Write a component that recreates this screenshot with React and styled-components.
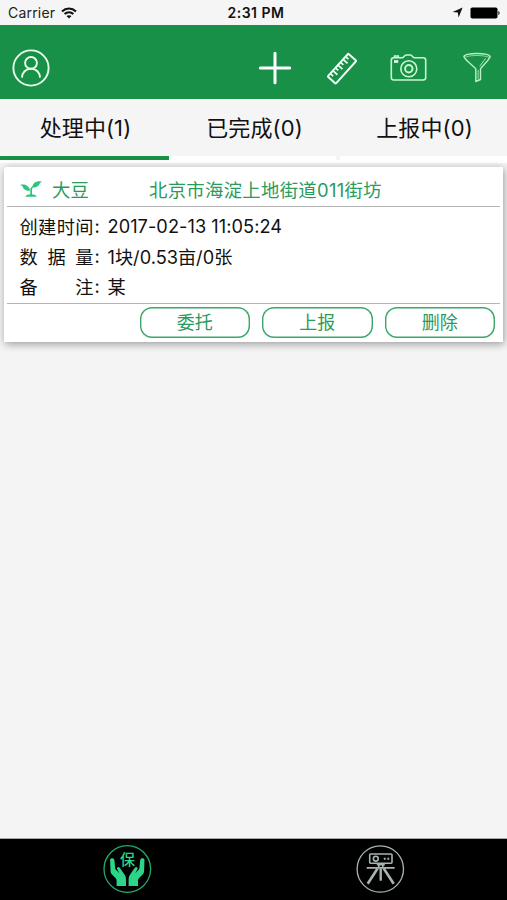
import React from "react";
import styled, { createGlobalStyle } from "styled-components";

const tabs = ["处理中(1)", "已完成(0)", "上报中(0)"];
const actions = ["委托", "上报", "删除"];

const rows = [
  { label: ["创", "建", "时", "间"], value: "2017-02-13 11:05:24", spacing: "0.05px" },
  { label: ["数", "据", "量"], value: "1块/0.53亩/0张", spacing: "0" },
  { label: ["备", "注"], value: "某" },
];

export default function App() {
  return (
    <Screen>
      <GlobalStyle />
      <StatusBar>
        <Carrier>
          Carrier <WifiIcon />
        </Carrier>
        <Clock>2:31 PM</Clock>
        <StatusRight>
          <LocationIcon />
          <BatteryIcon />
        </StatusRight>
      </StatusBar>
      <Header>
        <UserIcon />
        <Tools>
          <PlusIcon />
          <RulerIcon />
          <CameraIcon />
          <FunnelIcon />
        </Tools>
      </Header>
      <Tabs>
        {tabs.map((tab, i) => (
          <Tab key={tab} $active={i === 0}>
            {tab}
          </Tab>
        ))}
      </Tabs>
      <Content>
        <Card>
          <CardHead>
            <SproutIcon />
            <Crop>大豆</Crop>
            <Place>北京市海淀上地街道011街坊</Place>
          </CardHead>
          <CardBody>
            {rows.map((row) => (
              <Row key={row.value}>
                <Label>
                  {row.label.map((c) => (
                    <span key={c}>{c}</span>
                  ))}
                </Label>
                <Colon>:</Colon>
                <Value $spacing={row.spacing}>{row.value}</Value>
              </Row>
            ))}
          </CardBody>
          <CardFoot>
            {actions.map((a) => (
              <Action key={a}>{a}</Action>
            ))}
          </CardFoot>
        </Card>
      </Content>
      <BottomBar>
        <BottomItem>
          <InsuranceIcon />
        </BottomItem>
        <BottomItem>
          <SurveyIcon />
        </BottomItem>
      </BottomBar>
    </Screen>
  );
}

function WifiIcon() {
  return (
    <svg width="16" height="12" viewBox="0 0 16 12" fill="none" stroke="#111" strokeWidth="2.1">
      <path d="M1 4.4C5 .6 11 .6 15 4.4" />
      <path d="M3.6 7.1c2.5-2.3 6.3-2.3 8.8 0" />
      <path d="M8 11.6L5.5 9.1c1.4-1.3 3.6-1.3 5 0z" fill="#111" stroke="none" />
    </svg>
  );
}

function LocationIcon() {
  return (
    <svg width="11" height="11" viewBox="0 0 11 11" fill="#111">
      <path d="M10.6.4L6.6 10.4 5.8 5.4.6 4.9z" />
    </svg>
  );
}

function BatteryIcon() {
  return (
    <svg width="31" height="12" viewBox="0 0 31 12" fill="#000">
      <rect x="0.5" y="0.4" width="27" height="11.2" rx="1.8" />
      <path d="M28.4 4c1.5.3 1.5 3.7 0 4z" />
    </svg>
  );
}

function UserIcon() {
  return (
    <svg width="38" height="38" viewBox="0 0 38 38" fill="none" stroke="#e6ffe9" strokeWidth="1.9">
      <circle cx="19" cy="19" r="17.6" />
      <circle cx="19" cy="13.9" r="5.9" />
      <path d="M10 28.6c.2-5 3.6-8.9 9-8.9s8.8 3.9 9 8.9" />
    </svg>
  );
}

function PlusIcon() {
  return (
    <svg width="34" height="34" viewBox="0 0 34 34" stroke="#fff" strokeWidth="3" strokeLinecap="round">
      <path d="M17 2.3v29.4M2.3 17h29.4" />
    </svg>
  );
}

function RulerIcon() {
  return (
    <svg width="32" height="34" viewBox="0 0 32 34" fill="none" stroke="#f0fff2" strokeWidth="2" strokeLinejoin="round">
      <g transform="translate(16 17.7) rotate(-48)">
        <rect x="-15.4" y="-5.4" width="30.8" height="10.8" rx="0.8" />
        <path
          d="M-11.4-5.4v3.8M-7.600-5.400v6M-3.800-5.400v3.800M0-5.400v6M3.800-5.400v3.800M7.600-5.400v6M11.400-5.400v3.800"
          strokeWidth="1.7"
        />
      </g>
    </svg>
  );
}

function CameraIcon() {
  return (
    <svg width="38" height="30" viewBox="0 0 38 30" fill="none" stroke="#c9f7d2" strokeWidth="1.6">
      <path d="M3.8 4.8h8.400c1.5 0 2.2-2.8 4-2.8h4.3c1.800 0 2.300 2.800 4 2.800h8.700c1.600 0 2.500 1 2.500 2.500v17.200c0 1.500-.9 2.500-2.500 2.500H3.800c-1.600 0-2.500-1-2.500-2.500V7.300c0-1.500.9-2.500 2.500-2.500z" />
      <circle cx="18.8" cy="15.8" r="8" />
      <circle cx="18.8" cy="15.8" r="3.7" strokeWidth="2" />
      <path d="M4.500 4.500V3h3.800v1.500" />
      <rect x="4" y="7.2" width="4.2" height="2.6" fill="#e6ffe9" stroke="none" />
    </svg>
  );
}

function FunnelIcon() {
  return (
    <svg width="28" height="31" viewBox="0 0 28 31" fill="none" stroke="#b9efc5" strokeWidth="1.4" strokeLinejoin="round">
      <path d="M.9 4.7C.9 2.7 6.5 1.5 14 1.5s13.100 1.200 13.100 3.200c-1.200 3.300-6.700 8.500-9.600 12v10.800l-4.700 2V16.700C9.300 13 2.200 8 .9 4.700z" />
      <path d="M2 5.2C5.8 3.800 10 3.500 14 3.500s8.400.4 12 1.700" strokeWidth=".7" />
      <path d="M22.7 6.3l-6 8M15.100 18v9.500" strokeWidth=".9" />
    </svg>
  );
}

function SproutIcon() {
  return (
    <svg width="24" height="18" viewBox="0 0 24 18" fill="#2bc57d">
      <path d="M.9 4.900c4.400-1.200 8.800.2 10.300 5.600C6 11.400 4.600 9 3.600 6.600 3 5.500 2 5 .9 4.900z" />
      <path d="M22.800 1.500c-4.800-1-9.200 1-9.500 5.800 4.200.8 6.200-1.300 7.300-3.600.5-1 1.200-1.700 2.200-2.200z" />
      <path d="M11.300 15V9.300c.1-1.600 1.600-2.900 4.400-3.700-1.600 1.500-2.700 2.900-2.700 4.500V15z" />
      <path d="M6.300 16.800c.6-1.700 2.700-2.500 5.700-2.500s5.100.8 5.700 2.500z" />
    </svg>
  );
}

function InsuranceIcon() {
  return (
    <svg width="50" height="50" viewBox="0 0 50 50">
      <circle cx="25.300" cy="25" r="23.3" fill="none" stroke="#20ab69" strokeWidth="1.3" />
      <IconText x="25.6" y="21.1" textAnchor="middle">
        保
      </IconText>
      <g fill="#2bd589">
        <path d="M8.1 15.500c.8-2 4-1.800 4.300.6l.9 9 4 4.200-2.300-4.500c-.4-1.600 1.400-2.600 2.600-1.300l4.500 6.500c1.300 1.700 1.900 3.200 1.900 5.500v6.600h-9.400V37c0-1.500-.5-2.400-1.600-3.400l-3-3c-1-1-1.400-2-1.500-3.500z" />
        <path d="M42.5 15.500c-.8-2-4-1.800-4.300.6l-.9 9-4 4.200 2.300-4.500c.4-1.600-1.400-2.600-2.600-1.300l-4.500 6.500c-1.300 1.700-1.900 3.200-1.900 5.500v6.600H36V37c0-1.500.5-2.400 1.600-3.400l3-3c1-1 1.400-2 1.500-3.500z" />
      </g>
    </svg>
  );
}

function SurveyIcon() {
  return (
    <svg width="50" height="50" viewBox="0 0 50 50" fill="none" stroke="#a6b5b0" strokeWidth="1.6">
      <circle cx="25.3" cy="25" r="23.2" strokeWidth="1.3" />
      <rect x="14.7" y="10" width="22.3" height="9.3" rx="1" />
      <circle cx="20.8" cy="14.7" r="2.4" />
      <path d="M28.8 14.7h1.9M32.3 14.7h1.9" strokeWidth="2" />
      <path d="M21.8 20.6h8M23.8 20.6v3M27.8 20.6v3M11.7 23.9h27.9" />
      <path d="M25.7 24.5v12.2" strokeWidth="2.4" />
      <path d="M22.6 24.5L12.7 39.8M28.7 24.5l10 15.300" strokeWidth="2.6" />
    </svg>
  );
}

const GlobalStyle = createGlobalStyle`
  body {
    margin: 0;
    background: #f4f4f4;
  }
`;

const Screen = styled.div`
  box-sizing: border-box;
  width: 507px;
  height: 900px;
  display: flex;
  flex-direction: column;
  overflow: hidden;
  background: #f4f4f4;
  color: #111;
  font-family: "Inter", "Noto Sans CJK SC", sans-serif;

  svg {
    display: block;
    flex: none;
  }
`;

const StatusBar = styled.div`
  height: 25px;
  padding: 0 6px 0 8px;
  box-sizing: border-box;
  display: grid;
  grid-template-columns: 1fr auto 1fr;
  align-items: center;
  background: #f5f5f5;
  font-size: 14px;
  line-height: 25px;
`;

const Carrier = styled.div`
  display: flex;
  align-items: center;
  gap: 6px;
  color: #222;
  letter-spacing: 0.2px;
`;

const Clock = styled.div`
  padding: 0 0 0 3px;
  font-weight: 600;
  font-size: 14px;
  letter-spacing: 0.5px;
`;

const StatusRight = styled.div`
  display: flex;
  justify-content: flex-end;
  align-items: center;
  gap: 7px;
`;

const Header = styled.header`
  height: 73.5px;
  box-sizing: border-box;
  padding: 12px 16px 0 12px;
  display: flex;
  align-items: center;
  justify-content: space-between;
  background: #189048;
`;

const Tools = styled.div`
  display: flex;
  align-items: center;
  gap: 34px;

  /* the camera sits a touch closer to the ruler than to the funnel */
  svg:nth-child(3) {
    margin: 0 1px 0 -1.5px;
  }
`;

const Tabs = styled.nav`
  height: 61.5px;
  display: grid;
  grid-template-columns: repeat(3, 1fr);
  background: #f5f5f5;
`;

const Tab = styled.div`
  border-bottom: 4px solid ${(p) => (p.$active ? "#189048" : "#fff")};
  display: flex;
  align-items: center;
  justify-content: center;
  padding: 0 0 3px 2px;
  font-size: 22px;
  letter-spacing: 0.1px;

  &:nth-child(2) {
    margin-right: 2px;
    padding-left: 4px;
  }

  &:nth-child(3) {
    margin-left: 2px;
  }
`;

const Content = styled.main`
  flex: 1;
  padding: 7px 4px 0;
  background: linear-gradient(#fff, #fff) top / 100% 3px no-repeat;
`;

const Card = styled.section`
  height: 175px;
  box-sizing: border-box;
  padding: 0 3px;
  display: flex;
  flex-direction: column;
  background: #fff;
  border-radius: 2px 0 0 0;
  box-shadow: 1px 2px 8px rgba(0, 0, 0, 0.38);
`;

const CardHead = styled.div`
  height: 40px;
  box-sizing: border-box;
  padding: 5px 0 0 12px;
  display: flex;
  align-items: center;
  border-bottom: 1px solid #b4b4b4;
  color: #2b9b5c;
  font-size: 18.4px;
`;

const Crop = styled.span`
  width: 106px;
  padding-left: 9px;
  box-sizing: border-box;
`;

const Place = styled.span`
  letter-spacing: 0.28px;
`;

const CardBody = styled.div`
  height: 96.5px;
  padding: 3.5px 0 0 12.5px;
  box-sizing: border-box;
  border-bottom: 1px solid #b4b4b4;
`;

const Row = styled.div`
  height: 30px;
  display: flex;
  align-items: center;
  font-size: 18.2px;
`;

const Label = styled.div`
  width: 74px;
  display: flex;
  justify-content: space-between;
`;

const Colon = styled.span`
  width: 14px;
  padding-left: 1px;
  box-sizing: border-box;
`;

const Value = styled.span`
  letter-spacing: ${(p) => p.$spacing || "normal"};
`;

const CardFoot = styled.div`
  flex: 1;
  display: flex;
  align-items: center;
  justify-content: flex-end;
  gap: 12px;
  padding: 0 5px 1px 0;
`;

const Action = styled.button`
  width: 110.5px;
  height: 31px;
  padding: 2px 0 0;
  border: 0;
  box-shadow: inset 0 0 0 1.4px #3ba868;
  border-radius: 12px;
  background: #fff;
  color: #2b9b5c;
  font: inherit;
  font-size: 18px;
  line-height: 28px;
`;

const BottomBar = styled.footer`
  height: 62px;
  box-sizing: border-box;
  padding-bottom: 1px;
  display: grid;
  grid-template-columns: 1fr 1fr;
  border-top: 1px solid #aaa;
  background: #000;
`;

const BottomItem = styled.div`
  display: flex;
  align-items: center;
  justify-content: center;
`;

const IconText = styled.text`
  fill: #2bd589;
  font-family: "Noto Sans CJK SC", sans-serif;
  font-size: 15px;
  font-weight: 500;
`;
